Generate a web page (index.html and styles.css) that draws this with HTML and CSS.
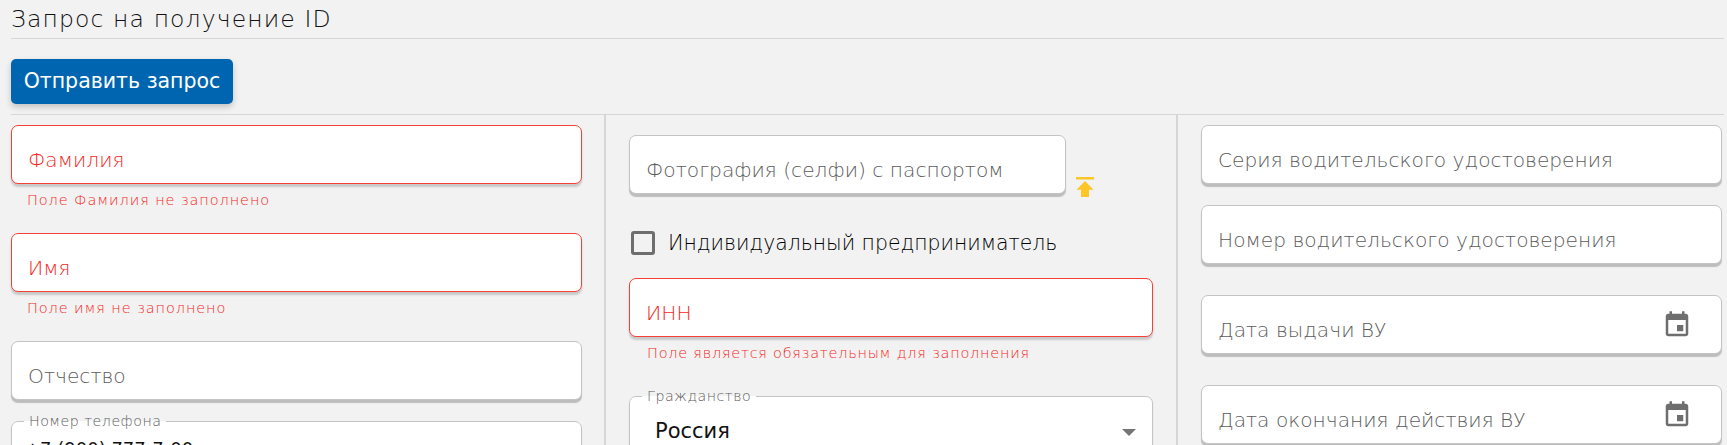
FILE: index.html
```html
<!DOCTYPE html>
<html lang="ru">
<head>
<meta charset="utf-8">
<title>Запрос на получение ID</title>
<link rel="stylesheet" href="styles.css">
</head>
<body>
<main class="page">
  <h1 class="title">Запрос на получение ID</h1>
  <div class="actions"><button class="submit" type="button">Отправить запрос</button></div>
  <div class="columns">
    <section class="col col-a">
      <div class="field invalid"><span class="ph">Фамилия</span></div>
      <p class="error">Поле Фамилия не заполнено</p>
      <div class="field invalid"><span class="ph">Имя</span></div>
      <p class="error">Поле имя не заполнено</p>
      <div class="field"><span class="ph">Отчество</span></div>
      <fieldset class="field outlined phone"><legend>Номер телефона</legend><span class="val">+7 (900) 777-7-00</span></fieldset>
    </section>
    <section class="col col-b">
      <div class="upload">
        <div class="field"><span class="ph">Фотография (селфи) с паспортом</span></div>
        <svg class="up-icon" viewBox="0 0 18 20" aria-hidden="true"><path d="M0 0h18v2.5H0z"/><path d="M9 4l8.5 8.700H13V20H5v-7.300H.5z"/></svg>
      </div>
      <label class="check"><span class="box"></span><span>Индивидуальный предприниматель</span></label>
      <div class="field invalid"><span class="ph">ИНН</span></div>
      <p class="error">Поле является обязательным для заполнения</p>
      <fieldset class="field outlined citizen"><legend>Гражданство</legend><span class="val">Россия</span><span class="caret"></span></fieldset>
    </section>
    <section class="col col-c">
      <div class="field"><span class="ph">Серия водительского удостоверения</span></div>
      <div class="field"><span class="ph">Номер водительского удостоверения</span></div>
      <div class="field date"><span class="ph">Дата выдачи ВУ</span>
        <svg class="cal" viewBox="0 0 24 24" aria-hidden="true"><path d="M17 12h-5v5h5v-5zM16 1v2H8V1H6v2H5c-1.1 0-2 .9-2 2v14c0 1.1.9 2 2 2h14c1.1 0 2-.9 2-2V5c0-1.1-.9-2-2-2h-1V1h-2zm3 18H5V8h14v11z"/></svg>
      </div>
      <div class="field date"><span class="ph">Дата окончания действия ВУ</span>
        <svg class="cal" viewBox="0 0 24 24" aria-hidden="true"><path d="M17 12h-5v5h5v-5zM16 1v2H8V1H6v2H5c-1.1 0-2 .9-2 2v14c0 1.1.9 2 2 2h14c1.1 0 2-.9 2-2V5c0-1.1-.9-2-2-2h-1V1h-2zm3 18H5V8h14v11z"/></svg>
      </div>
    </section>
  </div>
</main>
</body>
</html>
```
FILE: styles.css
```css
* { box-sizing: border-box; }
html, body { margin: 0; height: 445px; overflow: hidden; background: #f2f2f2; }
body { font-family: "DejaVu Sans", Inter, sans-serif; font-weight: 200; color: #222; }
.page { padding: 0 3px 0 11px; }
.title {
  margin: 0; height: 39px; padding-top: 6px;
  font-size: 23.5px; line-height: 27px; font-weight: 200; letter-spacing: 1.1px;
  color: #111; border-bottom: 1px solid #d6d6d6;
}
.actions { height: 76px; padding-top: 20px; border-bottom: 1px solid #d6d6d6; }
.submit {
  display: block; width: 222px; height: 45px; padding: 0;
  font: 400 20.5px/45px "DejaVu Sans", sans-serif; color: #fff;
  background: #0065b0; border: 0; border-radius: 5px;
  box-shadow: 0 3px 6px rgba(0,0,0,.2);
}
.columns { display: grid; grid-template-columns: 593px 572px 1fr; height: 331px; }
.col { display: flex; flex-direction: column; align-items: stretch; height: 100%; }
.col-a { padding: 10px 22px 0 0; }
.col-b { padding: 20px 23px 0 23px; border-left: 2px solid #d6d6d6; }
.col-c { padding: 10px 2px 0 23px; border-left: 2px solid #d6d6d6; }
.field {
  position: relative; flex: none; display: flex; align-items: flex-end;
  height: 59px; margin: 0; padding: 0 16px 9px;
  background: #fff; border: 1px solid #c4c4c4; border-radius: 7px;
  box-shadow: 0 3px 1px #bdbdbd;
}
.ph { font-size: 20.2px; line-height: 28px; color: #5c5c5c; white-space: nowrap; }
.invalid { border-color: #f44336; box-shadow: 0 3px 2px #c8c8c8; }
.invalid .ph { color: #f2281e; }
.error {
  margin: 6px 0 22px 16px; height: 21px;
  font-size: 14.5px; line-height: 21px; letter-spacing: .9px; color: #f2281e; white-space: nowrap;
}
.col-b .error { margin: 6px 0 25px 18px; letter-spacing: .75px; }
.col-a .field:not(.invalid) { margin-bottom: 14px; }
.outlined { display: block; padding: 0 16px; height: 70px; min-width: 0; }
.outlined legend {
  padding: 0 5px; margin-left: -4px; font-size: 14.2px; line-height: 14px; letter-spacing: .5px; color: #5c5c5c;
}
.val { display: block; font-size: 21px; line-height: 28px; font-weight: 400; color: #111; }
.phone .val { padding: 7px 0 0 0; margin-left: -3px; font-size: 18px; }
.citizen .val { padding: 14px 0 0 9px; }
.caret {
  position: absolute; right: 16px; top: 26px; width: 0; height: 0;
  border-left: 7px solid transparent; border-right: 7px solid transparent; border-top: 7px solid #757575;
}
.upload { display: flex; align-items: flex-end; }
.upload .field { width: 437px; }
.up-icon { width: 18px; height: 20px; margin: 0 0 -3px 10px; fill: #ffc627; flex: none; }
.check { display: flex; align-items: center; gap: 13px; height: 28px; margin: 35px 0 21px 2px; font-size: 20.4px; line-height: 28px; font-weight: 200; color: #000; }
.box { width: 24px; height: 24px; border: 3px solid #6e6e6e; border-radius: 3px; flex: none; }
.col-c .field { margin-bottom: 21px; }
.col-c .date { margin-top: 10px; margin-bottom: 21px; }
.cal { position: absolute; right: 29px; top: 14px; width: 30px; height: 30px; fill: #6e6e6e; }
```
